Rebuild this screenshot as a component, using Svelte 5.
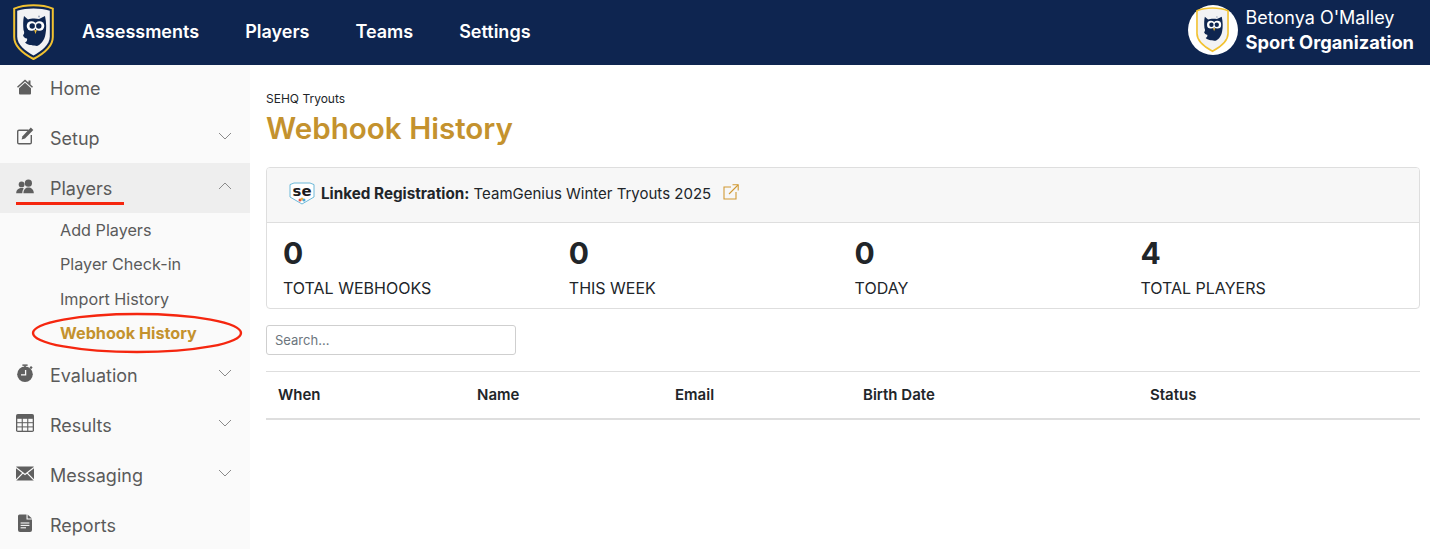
<script>
  const topLinks = ['Assessments', 'Players', 'Teams', 'Settings'];

  const menu = [
    { name: 'Home', icon: 'home' },
    { name: 'Setup', icon: 'setup', chevron: 'down' },
    {
      name: 'Players',
      icon: 'players',
      chevron: 'up',
      open: true,
      children: ['Add Players', 'Player Check-in', 'Import History', 'Webhook History']
    },
    { name: 'Evaluation', icon: 'evaluation', chevron: 'down' },
    { name: 'Results', icon: 'results', chevron: 'down' },
    { name: 'Messaging', icon: 'messaging', chevron: 'down' },
    { name: 'Reports', icon: 'reports' }
  ];

  const stats = [
    { value: 0, label: 'TOTAL WEBHOOKS' },
    { value: 0, label: 'THIS WEEK' },
    { value: 0, label: 'TODAY' },
    { value: 4, label: 'TOTAL PLAYERS' }
  ];

  const columns = ['When', 'Name', 'Email', 'Birth Date', 'Status'];
</script>

{#snippet owl(size, gap)}
  <svg width={size} height={size * 56 / 41} viewBox="0 0 41 56">
    <path d="M20.5 1.2 C27 1.2 34 2.2 39.8 4.6 V33 C39.8 43 30 50 20.5 55 C11 50 1.2 43 1.2 33 V4.6 C7 2.2 14 1.2 20.5 1.2Z" fill={gap} stroke="#f2c230" stroke-width="2" />
    <path d="M20.5 4.4 C26 4.4 32 5.2 36.8 6.8 V32.5 C36.8 41 28.5 47 20.5 51.5 C12.5 47 4.2 41 4.2 32.5 V6.8 C9 5.2 15 4.4 20.5 4.4Z" fill="#f2f2f4" />
    <path d="M11 12 L15 15.5 C18 14.2 23 14.2 26 15 L32 12 C33.5 19 33.5 25 32.5 30 C31.5 37 27 41 24 42 C21 41.5 16 42 12 38.5 C14 37.5 14.5 36 14 34.5 C12 34.5 10.5 33 10 31 C11.5 30.5 11.5 28 10.5 26 C10 21 10 16 11 12Z" fill="#0e2550" />
    <circle cx="18.5" cy="22" r="4.8" fill="#fff" />
    <circle cx="26.5" cy="22" r="4.8" fill="#fff" />
    <circle cx="19.2" cy="22" r="2.7" fill="#0e2550" />
    <circle cx="25.8" cy="22" r="2.7" fill="#0e2550" />
    <path d="M21.1 26 h2.8 l-1.4 4z" fill="#e8b93a" />
    <circle cx="26" cy="12.5" r="1" fill="#9aa5bb" />
  </svg>
{/snippet}

{#snippet menuIcon(name)}
  <svg class="menu-icon" width="18" height="18" viewBox="0 0 18 18" fill="#5f5f5f">
    {#if name === 'home'}
      <path d="M9 2.4 L1 9.8 L2 10.8 L9 4.6 L16 10.8 L17 9.8 L14.5 7.4 V3.4 H12.5 V5.6Z" />
      <path d="M9 5.8 L3 11.2 V16.4 Q3 17.4 4 17.4 H14 Q15 17.4 15 16.4 V11.2Z" />
    {:else if name === 'setup'}
      <path d="M12.5 3.2 H3 Q1.7 3.2 1.7 4.5 V15.5 Q1.7 16.8 3 16.8 H14 Q15.3 16.8 15.3 15.5 V8" fill="none" stroke="#5f5f5f" stroke-width="1.4" />
      <path d="M14.8 0.6 L17.3 3.1 L9 11.6 L5.6 12.6 L6.5 9.2Z" />
    {:else if name === 'players'}
      <circle cx="5.6" cy="7.4" r="2.9" />
      <circle cx="12.4" cy="6.2" r="3.6" />
      <path d="M0.2 16.2 C0.2 12.4 3 11 5.6 11 C6.5 11 7.2 11.2 7.8 11.4 C6.8 12.4 6.3 14.2 6.3 16.2Z" />
      <path d="M7.4 16.2 C7.4 12.2 9.8 10.4 12.4 10.4 C15 10.4 17.8 12.2 17.8 16.2Z" />
    {:else if name === 'evaluation'}
      <circle cx="9" cy="10.2" r="7.8" />
      <rect x="6.4" y="0.4" width="5.2" height="1.5" />
      <rect x="8.2" y="1.5" width="1.6" height="2" />
      <rect x="14" y="2.4" width="2.2" height="2.2" transform="rotate(45 15 3.5)" />
      <path d="M9.6 6 V10.8 H5" fill="none" stroke="#fafafa" stroke-width="1.3" />
    {:else if name === 'results'}
      <rect x="0" y="0" width="18" height="18" rx="1.8" />
      <g fill="#fafafa">
        <rect x="1.3" y="4.8" width="4.4" height="3.4" /><rect x="6.8" y="4.8" width="4.4" height="3.4" /><rect x="12.3" y="4.8" width="4.4" height="3.4" />
        <rect x="1.3" y="9.2" width="4.4" height="3.2" /><rect x="6.8" y="9.2" width="4.4" height="3.2" /><rect x="12.3" y="9.2" width="4.4" height="3.2" />
        <rect x="1.3" y="13.4" width="4.4" height="3.3" /><rect x="6.8" y="13.4" width="4.4" height="3.3" /><rect x="12.3" y="13.4" width="4.4" height="3.3" />
      </g>
    {:else if name === 'messaging'}
      <rect x="0" y="2.5" width="18" height="14" rx="0.8" />
      <g fill="none" stroke="#fafafa" stroke-width="1.2">
        <path d="M0 3.6 L9 10.4 L18 3.6" />
        <path d="M0 16 L7 8.8" />
        <path d="M18 16 L11 8.8" />
      </g>
    {:else if name === 'reports'}
      <path d="M3.5 0.5 H10.5 V5.5 H16 V16 Q16 18 14 18 H4 Q2 18 2 16 V2 Q2 0.5 3.5 0.5Z" />
      <path d="M11.6 0.5 L16 4.6 H11.6Z" />
      <g stroke="#fafafa" stroke-width="1.1"><path d="M4.6 9 H13.4" /><path d="M4.6 11.4 H13.4" /><path d="M4.6 13.8 H10" /></g>
    {/if}
  </svg>
{/snippet}

<header class="topbar">
  <div class="logo">{@render owl(41, '#0e2550')}</div>
  <nav class="top-nav">
    {#each topLinks as link}
      <span>{link}</span>
    {/each}
  </nav>
  <div class="account">
    <div class="avatar">{@render owl(33, '#f2f2f4')}</div>
    <div class="account-text">
      <div class="account-name">Betonya O'Malley</div>
      <div class="account-org">Sport Organization</div>
    </div>
  </div>
</header>

<div class="body">
  <aside class="sidebar">
    {#each menu as item}
      <div class="menu-row" class:open={item.open} class:first={item.name === 'Home'}>
        {@render menuIcon(item.icon)}
        <span class="menu-name">{item.name}</span>
        {#if item.chevron}
          <svg class="chevron" width="14" height="8" viewBox="0 0 14 8" fill="none" stroke="#8a8a8a" stroke-width="1">
            {#if item.chevron === 'down'}
              <path d="M1 1 L7 7 L13 1" />
            {:else}
              <path d="M1 7 L7 1 L13 7" />
            {/if}
          </svg>
        {/if}
        {#if item.open}
          <div class="underline"></div>
        {/if}
      </div>
      {#if item.children}
        <div class="submenu">
          {#each item.children as child}
            <div class="sub-row" class:active={child === 'Webhook History'}>
              {child}
              {#if child === 'Webhook History'}
                <svg class="ellipse" width="214" height="46" viewBox="0 0 214 46" fill="none">
                  <ellipse cx="107" cy="23" rx="104" ry="19" stroke="#f5260f" stroke-width="2.4" />
                </svg>
              {/if}
            </div>
          {/each}
        </div>
      {/if}
    {/each}
  </aside>

  <main class="content">
    <div class="crumb">SEHQ Tryouts</div>
    <h1>Webhook History</h1>

    <section class="card">
      <div class="card-head">
        <svg width="26" height="23" viewBox="0 0 26 23">
          <path d="M1 2.6 L5 1 H21 L25 2.6 V15 L13 22 L1 15Z" fill="#fff" stroke="#6cb8d8" stroke-width="1" />
          <text x="13" y="13.5" text-anchor="middle" class="se-mark" textLength="19" lengthAdjust="spacingAndGlyphs">se</text>
          <circle cx="11" cy="18" r="1.5" fill="#e4564c" /><circle cx="13" cy="17" r="1.5" fill="#f0b43c" /><circle cx="15" cy="18" r="1.5" fill="#4aa5d8" />
        </svg>
        <span class="linked"><strong>Linked Registration:</strong> TeamGenius Winter Tryouts 2025</span>
        <svg class="external" width="16" height="16" viewBox="0 0 16 16" fill="none" stroke="#d19a35" stroke-width="1.1">
          <path d="M8 3 H1 V15 H13 V8" />
          <path d="M6 10 L15 1" />
          <path d="M9.5 0.8 H15.2 V6.5" />
        </svg>
      </div>
      <div class="stats">
        {#each stats as stat}
          <div class="stat">
            <div class="stat-value">{stat.value}</div>
            <div class="stat-label">{stat.label}</div>
          </div>
        {/each}
      </div>
    </section>

    <input class="search" type="text" placeholder="Search..." />

    <div class="table-head">
      {#each columns as col}
        <div>{col}</div>
      {/each}
    </div>
  </main>
</div>

<style>
  :global(body) {
    margin: 0;
    background: #fff;
    overflow: hidden;
    font-family: Inter, "Liberation Sans", sans-serif;
    color: #212529;
  }

  .topbar {
    height: 65px;
    box-sizing: border-box;
    background: #0e2550;
    display: flex;
    align-items: center;
    color: #fff;
    padding: 0 16px 2px 13px;
  }

  .logo {
    width: 41px;
    height: 56px;
    display: flex;
    align-items: center;
    margin-right: 28px;
  }

  .top-nav {
    display: flex;
    gap: 46px;
    font-size: 18px;
    font-weight: 600;
  }

  .account {
    margin-left: auto;
    margin-top: -3px;
    display: flex;
    align-items: center;
    gap: 8px;
  }

  .avatar {
    width: 50px;
    height: 50px;
    border-radius: 50%;
    background: #fff;
    display: flex;
    align-items: center;
    justify-content: center;
  }

  .account-name {
    font-size: 18px;
    line-height: 25px;
  }

  .account-org {
    font-size: 18.3px;
    font-weight: 700;
    line-height: 25px;
  }

  .body {
    display: flex;
    height: 484px;
    overflow: hidden;
  }

  .sidebar {
    width: 250px;
    flex: none;
    background: #fafafa;
  }

  .menu-row {
    position: relative;
    height: 50px;
    display: flex;
    align-items: center;
    padding: 0 16px;
    box-sizing: border-box;
    color: #5a5a5a;
    font-size: 18px;
  }

  .menu-row.first {
    height: 48px;
    padding-bottom: 2px;
  }

  .menu-row.open {
    background: #eeeeee;
  }

  .menu-icon {
    flex: none;
    margin-top: -5px;
  }

  .menu-name {
    margin-left: 16px;
  }

  .chevron {
    margin-left: auto;
    margin-right: 2px;
    margin-top: -5px;
  }

  .underline {
    position: absolute;
    left: 16px;
    top: 39px;
    width: 108px;
    height: 3px;
    background: #f5260f;
  }

  .submenu {
    height: 137px;
  }

  .sub-row {
    position: relative;
    height: 34.3px;
    line-height: 34.3px;
    padding-left: 60px;
    font-size: 16.2px;
    color: #5a5a5a;
  }

  .sub-row.active {
    color: #c4922e;
    font-weight: 700;
  }

  .ellipse {
    position: absolute;
    left: 30px;
    top: -6px;
  }

  .content {
    flex: 1;
    padding: 27px 10px 0 16px;
    min-width: 0;
  }

  .crumb {
    font-size: 12px;
    line-height: 14px;
  }

  h1 {
    margin: 4px 0 21px;
    font-size: 29.6px;
    line-height: 36px;
    font-weight: 600;
    color: #c4922e;
  }

  .card {
    border: 1px solid #dedede;
    border-radius: 4px;
    overflow: hidden;
  }

  .card-head {
    height: 55px;
    background: #f7f7f7;
    border-bottom: 1px solid #dedede;
    display: flex;
    align-items: center;
    padding: 0 0 4px 22px;
    box-sizing: border-box;
    font-size: 15px;
  }

  .linked {
    margin-left: 6px;
  }

  .linked strong {
    font-size: 15.25px;
    font-weight: 700;
  }

  .external {
    margin-left: 12px;
    margin-top: -3px;
  }

  .se-mark {
    font-family: "DejaVu Sans", sans-serif;
    font-size: 14px;
    font-weight: 700;
    fill: #1c1c1c;
  }

  .stats {
    display: grid;
    grid-template-columns: repeat(4, 285.8px);
    padding: 12px 16px 8px;
  }

  .stat-value {
    font-size: 30px;
    line-height: 36px;
    font-weight: 700;
  }

  .stat-label {
    font-size: 16px;
    line-height: 24px;
    margin-top: 5px;
  }

  .search {
    display: block;
    width: 250px;
    height: 30px;
    box-sizing: border-box;
    margin-top: 16px;
    padding: 0 8px;
    border: 1px solid #cfcfcf;
    border-radius: 3px;
    font-family: inherit;
    font-size: 13px;
  }

  .search::placeholder {
    color: #6c757d;
  }

  .table-head {
    display: grid;
    grid-template-columns: 199px 198px 188px 287px 1fr;
    margin-top: 16px;
    height: 49px;
    padding-bottom: 1px;
    box-sizing: border-box;
    border-top: 1px solid #dedede;
    border-bottom: 2px solid #dedede;
    padding-left: 12px;
    align-items: center;
    font-size: 15px;
    font-weight: 600;
  }
</style>
